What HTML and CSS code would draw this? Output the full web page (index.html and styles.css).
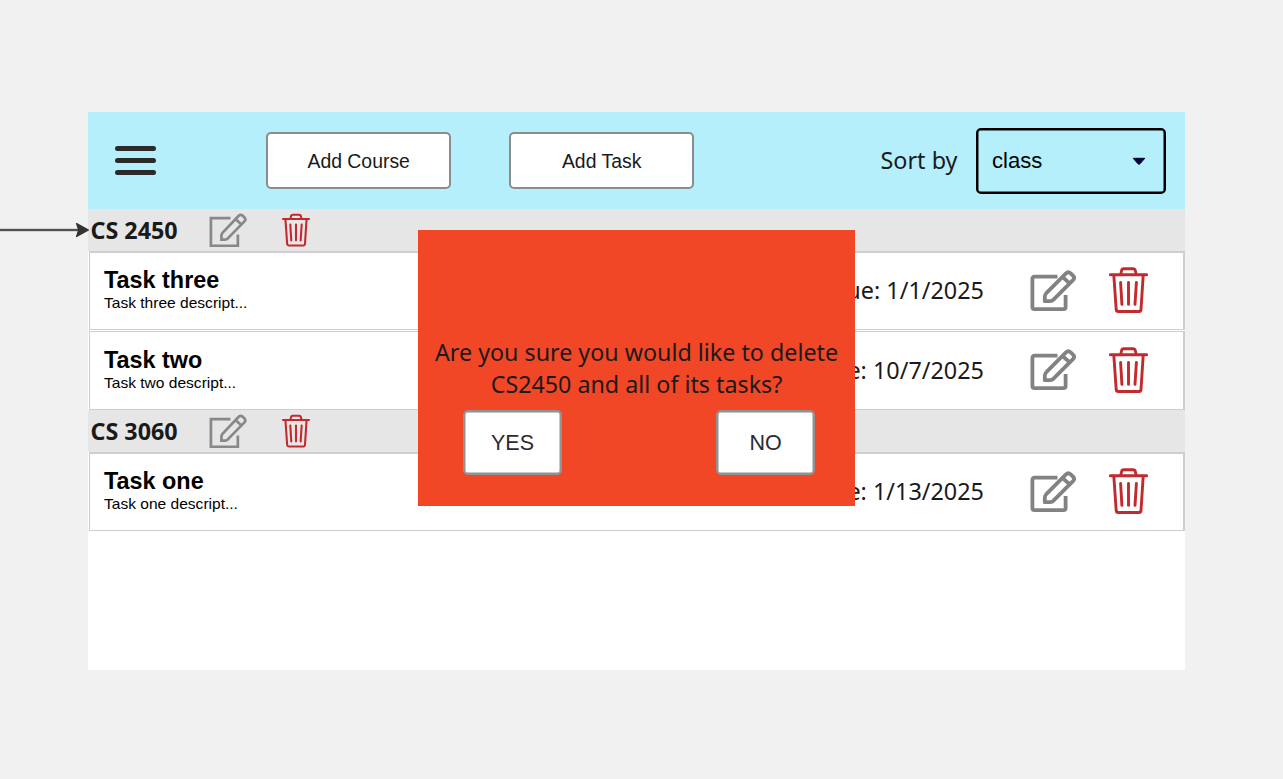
FILE: index.html
```html
<!DOCTYPE html>
<html lang="en">
<head>
<meta charset="utf-8">
<title>Tasks</title>
<link rel="stylesheet" href="styles.css">
</head>
<body>
<svg class="defs" width="0" height="0" aria-hidden="true">
  <symbol id="edit" viewBox="0 0 46 42">
    <path d="M27.5 6.7H4.5Q2.4 6.7 2.4 8.8V37Q2.4 39.2 4.5 39.2H33.5Q35.6 39.2 35.6 37V25"/>
    <path d="M14.8 31.2V26.5Q14.8 24.8 16.3 23.2L36 3.4Q38.3 1.2 40.7 3.4L43 5.6Q45.2 7.9 43 10.2L24 29.2Q22.2 31.2 20 31.2ZM32.3 6.9L40.2 13.8"/>
  </symbol>
  <symbol id="edit-square" viewBox="0 0 46 42">
    <path d="M26 6.2H2.2V40.1H35V26.3"/>
    <path d="M15 32.5V27.5Q15 25.6 16.3 24.1L35.7 3.6Q38.3 1.2 40.7 3.2L43 5.4Q45.2 7.9 43 10.2L24 29.6Q22 32.2 20 32.3ZM32 7.3L39.4 14"/>
  </symbol>
  <symbol id="trash" viewBox="0 0 39 46">
    <path d="M1.3 7.7H37.7M11.7 7.5L12.6 3.5Q13 1.8 14.8 1.8H24Q25.9 1.8 26.3 3.5L27.2 7.5M4.8 8L7.2 42.5Q7.4 44.5 9.3 44.5H30Q31.8 44.5 32 42.5L34.2 8M11.6 15.4L12.9 37.4M19.5 15.4V37.4M27.4 15.4L26 37.4"/>
  </symbol>
</svg>

<main class="app">
  <header class="toolbar">
    <div class="menu"><span></span><span></span><span></span></div>
    <button class="btn add">Add Course</button>
    <button class="btn add">Add Task</button>
    <span class="sort-label">Sort by</span>
    <div class="select"><span>class</span>
      <svg width="14" height="9" viewBox="0 0 14 9"><path d="M1.2 1.3H12.8L8 6.8Q7 7.7 6 6.8Z"/></svg>
    </div>
  </header>

  <section>
    <div class="course"><h2>CS 2450</h2>
      <svg class="icon edit small"><use href="#edit-square"/></svg>
      <svg class="icon trash small"><use href="#trash"/></svg></div>
    <article class="task">
      <div class="info"><h3>Task three</h3><p>Task three descript...</p></div>
      <span class="due">Due: 1/1/2025</span>
      <svg class="icon edit"><use href="#edit"/></svg>
      <svg class="icon trash"><use href="#trash"/></svg>
    </article>
    <article class="task">
      <div class="info"><h3>Task two</h3><p>Task two descript...</p></div>
      <span class="due">Due: 10/7/2025</span>
      <svg class="icon edit"><use href="#edit"/></svg>
      <svg class="icon trash"><use href="#trash"/></svg>
    </article>
  </section>
  <section>
    <div class="course"><h2>CS 3060</h2>
      <svg class="icon edit small"><use href="#edit-square"/></svg>
      <svg class="icon trash small"><use href="#trash"/></svg></div>
    <article class="task">
      <div class="info"><h3>Task one</h3><p>Task one descript...</p></div>
      <span class="due">Due: 1/13/2025</span>
      <svg class="icon edit"><use href="#edit"/></svg>
      <svg class="icon trash"><use href="#trash"/></svg>
    </article>
  </section>

  <div class="dialog">
    <p>Are you sure you would like to delete<br>CS2450 and all of its tasks?</p>
    <div class="actions"><button class="btn">YES</button><button class="btn">NO</button></div>
  </div>
</main>

<svg class="arrow" width="90" height="16" viewBox="0 0 90 16">
  <path d="M0 7.2H80V8.8H0Z"/><path d="M76.6 1.6L88.4 8L76.6 14.4L78.8 8Z" stroke-width="1.4" stroke-linejoin="round"/>
</svg>
</body>
</html>
```

FILE: styles.css
```css
* { box-sizing: border-box; }
body {
  margin: 0;
  height: 779px;
  padding: 112px 98px 0 88px;
  overflow: hidden;
  background: #f1f1f1;
  color: #1a1a1a;
  font-family: "Noto Sans", sans-serif;
}
h2, h3, p { margin: 0; }
.defs { position: absolute; }
.app { position: relative; width: 1097px; height: 558px; background: #fff; }

.toolbar { display: flex; align-items: center; height: 97px; padding: 0 19px 0 27.4px; background: #b6effc; }
.menu { display: flex; flex-direction: column; gap: 7px; width: 40.6px; margin-right: 110.4px; }
.menu span { height: 5px; border-radius: 2.5px; background: #2a2a2a; }
.btn {
  padding: 2px 0 0;
  border: 2px solid #8c8c8c;
  border-radius: 5px;
  background: #fff;
  color: #1a1a1a;
  font-family: "Liberation Sans", Arial, sans-serif;
}
.add { width: 184.6px; height: 57px; font-size: 19.4px; margin-right: 58.4px; }
.sort-label { margin-left: auto; margin-right: 18.5px; padding-bottom: 2px; font-size: 23.4px; white-space: nowrap; }
.select {
  display: flex; align-items: center; justify-content: space-between;
  width: 190px; height: 66px; padding: 0 18px 0 14px;
  border: 2px solid #000; border-radius: 5px;
  box-shadow: inset 0 0 0 .5px #000;
  color: #000; font: 22.1px "Liberation Sans", Arial, sans-serif;
}
.select svg { position: relative; top: 1px; fill: #050038; stroke: #050038; stroke-width: 1; stroke-linejoin: round; }

.course { display: flex; align-items: center; height: 42px; padding-left: 2.5px; background: #e6e6e6; }
.course h2 { width: 118.5px; font-size: 23.3px; line-height: 42px; white-space: nowrap; }
.task {
  display: flex; align-items: center;
  height: 79px; margin: 0 0 1px 1px; padding: 0 35px 2px 14px;
  border: 1px solid #cecece; border-top-width: 2px; border-right-width: 2px;
  background: #fff;
}
.task + .task { border-top-width: 1px; }
.task:last-child { margin-bottom: 0; }
.info { flex: 1; color: #000; font-family: "Liberation Sans", Arial, sans-serif; }
.info h3 { font-size: 23.4px; line-height: 26px; }
.info p { font-size: 15.55px; line-height: 20px; }
.due { margin-right: 46px; font-size: 23.4px; white-space: nowrap; }

.icon { flex: none; fill: none; stroke-linejoin: round; stroke-linecap: round; }
.edit { width: 46px; height: 42px; stroke: #828282; stroke-width: 3.8; stroke-linecap: butt; margin: 1px 33px 0 0; }
.trash { width: 39px; height: 46px; stroke: #c22a2d; stroke-width: 2.9; }
.edit.small { width: 38px; height: 34.5px; stroke: #888; stroke-width: 3.3; stroke-linejoin: miter; margin: 0 35px 0 0; }
.trash.small { width: 28px; height: 34px; }

.dialog {
  position: absolute; left: 330px; top: 118px;
  width: 437px; height: 276px; padding: 106px 45px 0;
  background: #f24726;
}
.dialog p { margin: 0 -40px; text-align: center; font-size: 23.28px; line-height: 32px; white-space: nowrap; }
.actions { display: flex; justify-content: space-between; margin: 10px -5px 0 0; }
.actions .btn { width: 99px; height: 65px; border-color: #929292; box-shadow: inset 0 0 0 .5px #929292; font-size: 21.5px; color: #2b2b33; }
.arrow { position: absolute; left: 0; top: 222px; fill: #333; stroke: #333; stroke-width: .5; }
```
